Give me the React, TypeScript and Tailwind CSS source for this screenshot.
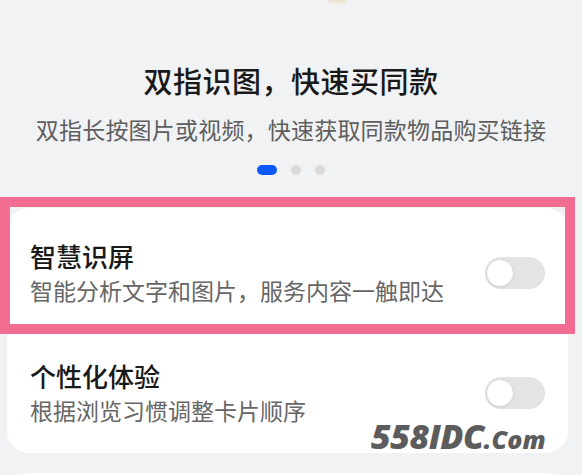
import React from "react";

type Setting = {
  title: string;
  desc: string;
  on: boolean;
};

const settings: Setting[] = [
  { title: "智慧识屏", desc: "智能分析文字和图片，服务内容一触即达", on: false },
  { title: "个性化体验", desc: "根据浏览习惯调整卡片顺序", on: false },
];

function Toggle({ on }: { on: boolean }) {
  return (
    <div
      className={`relative w-[60px] h-[32px] rounded-full shrink-0 ${
        on ? "bg-[#0a59f7]" : "bg-[#e4e4e4]"
      }`}
    >
      <div
        className={`absolute top-[2px] w-[28px] h-[28px] rounded-full bg-white border border-[#dadada] shadow-[0_1px_2px_rgba(0,0,0,0.08)] ${
          on ? "right-[2px]" : "left-[1px]"
        }`}
      />
    </div>
  );
}

export default function App() {
  return (
    <div
      className="relative w-[582px] h-[475px] overflow-hidden bg-[#f1f2f4]"
      style={{ fontFamily: '"Noto Sans CJK SC", "Noto Sans", sans-serif' }}
    >
      {/* bit of the picture above, cut off */}
      <div className="absolute left-[328px] top-[-4px] w-[18px] h-[7px] rounded-full bg-[#ece2cf] blur-[1px]" />

      {/* intro */}
      <div className="flex flex-col items-center pt-[60px]">
        <h1 className="text-[29px] leading-[40px] font-medium text-[#191919] tracking-[0.5px]">
          双指识图，快速买同款
        </h1>
        <p className="mt-[13px] text-[23px] leading-[32px] text-[#5e5e5e] tracking-[0.2px]">
          双指长按图片或视频，快速获取同款物品购买链接
        </p>
        <div className="mt-[20px] flex items-center gap-[14px]">
          <span className="w-[20px] h-[10px] rounded-full bg-[#0a59f7]" />
          <span className="w-[10px] h-[10px] rounded-full bg-[#dadada]" />
          <span className="w-[10px] h-[10px] rounded-full bg-[#dadada]" />
        </div>
      </div>

      {/* settings card */}
      <div className="mt-[33px] ml-[7px] w-[561px] rounded-[22px] bg-white pt-[5px]">
        {settings.map((s) => (
          <div key={s.title} className="flex items-center justify-between px-[23px] py-[25px]">
            <div className="flex flex-col">
              <span className="text-[26px] leading-[35px] font-medium text-[#191919]">{s.title}</span>
              <span className="text-[23px] leading-[35px] text-[#666666]">{s.desc}</span>
            </div>
            <Toggle on={s.on} />
          </div>
        ))}
      </div>

      <div className="mt-[20px] ml-[7px] w-[561px] h-[80px] rounded-[22px] bg-white" />

      {/* highlight frame */}
      <div className="absolute left-0 top-[197px] w-[575px] h-[137px] border-[10px] border-[#f26d91] pointer-events-none" />

      {/* watermark */}
      <div
        className="absolute left-[371px] top-[419px] italic font-extrabold text-[#5c5c5c] leading-none whitespace-nowrap"
        style={{ fontFamily: '"Open Sans", "Liberation Sans", sans-serif' }}
      >
        <span className="text-[34px] tracking-[-0.5px]">558IDC</span>
        <span className="text-[25px]">.Com</span>
      </div>
    </div>
  );
}
